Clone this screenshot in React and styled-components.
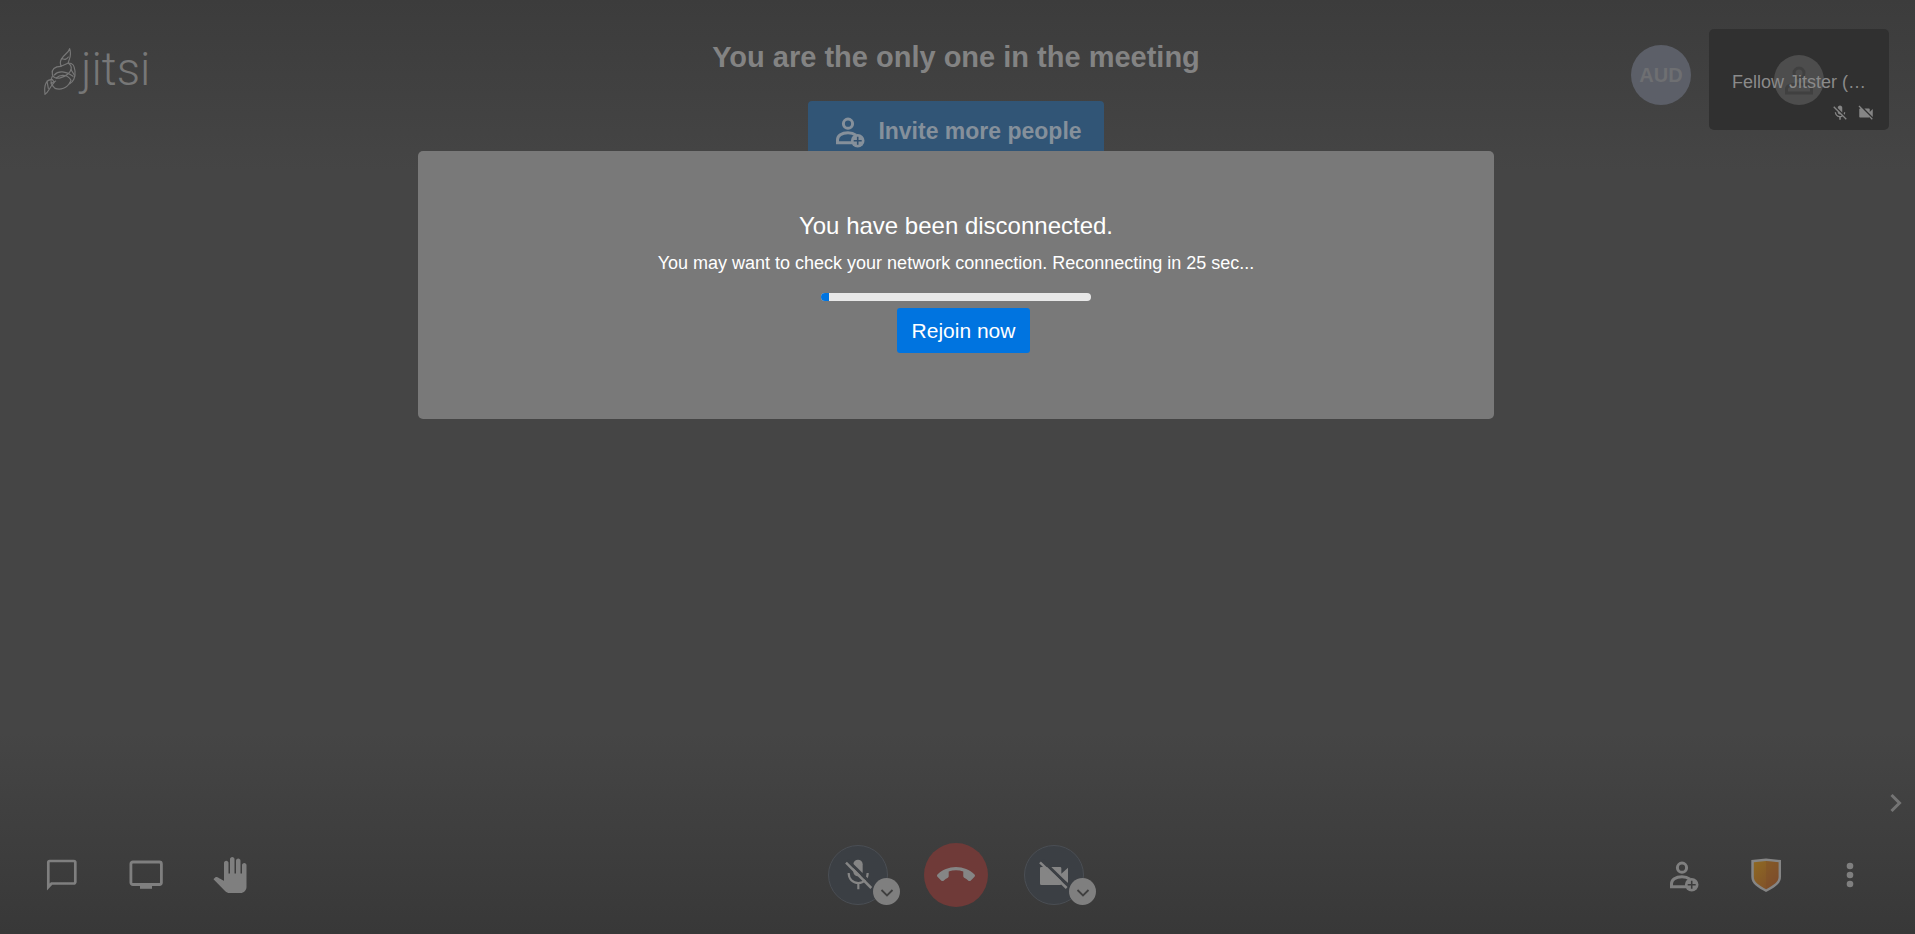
import React from 'react'
import styled, { createGlobalStyle } from 'styled-components';
import { MdPanTool, MdMicOff, MdVideocamOff, MdCallEnd } from 'react-icons/md';

const GlobalStyle = createGlobalStyle`
  * {
    box-sizing: border-box;
  }
  body {
    margin: 0;
    background-color: #444;
    font-family: "Liberation Sans", Arial, sans-serif;
  }
  button {
    font-family: inherit;
    border: none;
    padding: 0;
    cursor: pointer;
  }
`;

const ChatIcon = () => (
  <svg width="36" height="36" viewBox="0 0 36 36" fill="none" stroke="currentColor" strokeWidth="2.7">
    <path d="M4.300 30V5.500a1.500 1.500 0 0 1 1.500-1.500h24a1.500 1.500 0 0 1 1.500 1.500v19.500a1.500 1.500 0 0 1-1.500 1.500H7.500z" />
  </svg>
)

const ScreenIcon = () => (
  <svg width="36" height="36" viewBox="0 0 36 36" fill="none" stroke="currentColor" strokeWidth="2.8">
    <rect x="2.900" y="5" width="30.500" height="22.500" rx="2" />
    <path d="M12 29.800h12" strokeWidth="4" />
  </svg>
)

const InviteIcon = ({ plus }) => (
  <svg width="36" height="36" viewBox="0 0 36 36" fill="none" stroke="currentColor" strokeWidth="3">
    <circle cx="18" cy="10.700" r="4.600" />
    <path d="M22 29.700H7.500v-3c0-4 4-7 10.500-7 3 0 6 1 8 2.500" />
    <circle cx="27.700" cy="27.700" r="6.800" fill="currentColor" stroke="none" />
    <path d="M27.700 23.700v8M23.700 27.700h8" stroke={plus} strokeWidth="1.600" />
  </svg>
)

const ShieldIcon = () => (
  <svg width="36" height="36" viewBox="0 0 36 36">
    <defs>
      <linearGradient id="shield" x1="0" y1="0" x2="1" y2="1">
        <stop offset="0" stopColor="#8f6a22" />
        <stop offset="1" stopColor="#7c4a2c" />
      </linearGradient>
    </defs>
    <path d="M18 1.500 33 3v17c0 6.500-6.500 10.500-15 15C9.500 30.500 3.300 26.500 3.300 20V3z" fill="#858585" />
    <path d="M18 4 30.500 5.200V20c0 5-5 8-12.500 12.200C10.500 28 5.800 25 5.800 20V5.200z" fill="url(#shield)" />
    <path d="M18 4 30.500 5.200V20c0 5-5 8-12.500 12.200z" fill="#7c4a2c" fillOpacity=".35" />
  </svg>
)

const DotsIcon = () => (
  <svg width="36" height="36" viewBox="0 0 36 36" fill="currentColor">
    <circle cx="18" cy="9" r="3.300" />
    <circle cx="18" cy="18" r="3.300" />
    <circle cx="18" cy="27" r="3.300" />
  </svg>
)

const MutedMicIcon = () => (
  <svg width="32" height="32" viewBox="0 0 96 96" fill="none" stroke="currentColor" strokeWidth="6.500">
    <rect x="34" y="2" width="28" height="50" rx="14" fill="currentColor" stroke="none" />
    <path d="M20 42c0 18 12 30 29 30s28-12 28-30M49 72v19" />
    <path d="M16 3 96 83" stroke="#3b3f44" strokeWidth="9" />
    <path d="M12 11l76 76" strokeWidth="7.500" />
  </svg>
)

const CameraOffIcon = () => (
  <svg width="32" height="32" viewBox="0 0 96 96" fill="none" stroke="currentColor">
    <path d="M10 24h56a4 4 0 0 1 4 4v16l20-18v46L70 56v18a4 4 0 0 1-4 4H10a4 4 0 0 1-4-4V28a4 4 0 0 1 4-4z" fill="currentColor" stroke="none" />
    <path d="M12 3 94 83" stroke="#3b3f44" strokeWidth="9" />
    <path d="m6 10 80 77" strokeWidth="7.500" />
  </svg>
)

const SmallArrow = () => (
  <svg width="14" height="14" viewBox="0 0 14 14" fill="none" stroke="#404040" strokeWidth="1.800">
    <path d="m1.500 5 5.500 5.500L12.500 5" />
  </svg>
)

const Logo = () => (
  <svg width="34" height="48" viewBox="70 50 102 144" fill="none" stroke="#777" strokeWidth="3.500" strokeLinejoin="round" strokeLinecap="round">
    <path d="M150 55c-4 17-28 21-28 43l2 10q10-4 22-10c0-10 12-20 4-43zM126 84q12 8 20-4" />
    <path d="M124 108c-20 0-28 10-26 22 0 12 14 16 26 12 12-4 28-14 30-24M146 98c14 0 18 8 20 24 2 20-6 34-16 38" />
    <path d="M146 98c8 6 10 14 8 20l10 16M104 134c12-14 34-12 56 4M110 143c14-13 36-9 44 7l-4 10" />
    <path d="M98 138c-8 14-4 26 8 36 16 6 36 0 46-20M94 160l14-8" />
    <path d="M98 148c-16-2-26 12-22 44 12-8 12-20 28-36zM82 152l4 22" />
  </svg>
)

const App = () => {
  return (
    <Page>
      <GlobalStyle />
      <Header>
        <Brand href="#">
          <Logo />
          <Wordmark>jitsi</Wordmark>
        </Brand>
        <Subject>
          <Title>You are the only one in the meeting</Title>
          <InviteButton>
            <InviteIcon plus="#31506f" />
            Invite more people
          </InviteButton>
        </Subject>
        <Participants>
          <Avatar>AUD</Avatar>
          <Thumbnail>
            <DefaultAvatar>
              <svg width="30" height="30" viewBox="0 0 30 30" fill="none" stroke="#404040" strokeWidth="3">
                <circle cx="15" cy="8" r="5" />
                <path d="M2.500 28v-4c0-3 5-5 12.500-5s12.500 2 12.500 5v4z" />
              </svg>
            </DefaultAvatar>
            <DisplayName>Fellow Jitster (…</DisplayName>
            <StatusIcons>
              <MdMicOff size={18} />
              <MdVideocamOff size={18} />
            </StatusIcons>
          </Thumbnail>
        </Participants>
      </Header>

      <Dialog role="dialog" aria-labelledby="dialog-title">
        <DialogTitle id="dialog-title">You have been disconnected.</DialogTitle>
        <DialogText>You may want to check your network connection. Reconnecting in 25 sec...</DialogText>
        <Track>
          <Progress style={{ width: '3%' }} />
        </Track>
        <RejoinButton>Rejoin now</RejoinButton>
      </Dialog>

      <Footer>
        <FilmstripToggle aria-label="Toggle filmstrip">
          <svg width="12" height="20" viewBox="0 0 12 20" fill="none" stroke="currentColor" strokeWidth="3">
            <path d="m1.500 2 8 8-8 8" />
          </svg>
        </FilmstripToggle>
        <Toolbox>
          <Group>
            <ToolButton aria-label="Chat"><ChatIcon /></ToolButton>
            <ToolButton aria-label="Share screen"><ScreenIcon /></ToolButton>
            <ToolButton aria-label="Raise hand"><MdPanTool size={36} /></ToolButton>
          </Group>
          <CallControls>
            <Device>
              <RoundButton aria-label="Unmute"><MutedMicIcon /></RoundButton>
              <Settings aria-label="Audio settings"><SmallArrow /></Settings>
            </Device>
            <RoundButton $hangup aria-label="Leave"><MdCallEnd size={38} /></RoundButton>
            <Device>
              <RoundButton aria-label="Start camera"><CameraOffIcon /></RoundButton>
              <Settings aria-label="Video settings"><SmallArrow /></Settings>
            </Device>
          </CallControls>
          <Group $end>
            <ToolButton aria-label="Invite people"><InviteIcon plus="#3c3c3c" /></ToolButton>
            <ToolButton aria-label="Security"><ShieldIcon /></ToolButton>
            <ToolButton aria-label="More actions"><DotsIcon /></ToolButton>
          </Group>
        </Toolbox>
      </Footer>
    </Page>
  )
}

export default App

const Page = styled.div`
  min-height: 100vh;
  position: relative;
  display: flex;
  flex-direction: column;
  justify-content: space-between;
  background: linear-gradient(#3c3c3c, #454545 170px);
`;
const Header = styled.header`
  display: grid;
  grid-template-columns: 1fr auto 1fr;
  align-items: start;
  padding: 29px 26px 0 23px;
`;
const Brand = styled.a`
  display: flex;
  gap: 4px;
  margin: 18px 0 0 20px;
  justify-self: start;
  text-decoration: none;
`;
const Wordmark = styled.span`
  font-family: Roboto, sans-serif;
  font-size: 46px;
  font-weight: 300;
  line-height: 44px;
  color: #777;
`;
const Subject = styled.div`
  display: flex;
  flex-direction: column;
  align-items: center;
  gap: 28px;
  margin-top: 12px;
`;
const Title = styled.h1`
  margin: 0;
  font-size: 29px;
  line-height: 32px;
  color: #838383;
`;
const InviteButton = styled.button`
  display: flex;
  align-items: center;
  gap: 12px;
  height: 60px;
  padding: 0 22px;
  border-radius: 4px;
  background-color: #315576;
  color: #85909b;
  font-size: 23px;
  font-weight: bold;
`;
const Participants = styled.div`
  display: flex;
  gap: 18px;
  justify-self: end;
`;
const Avatar = styled.div`
  display: flex;
  align-items: center;
  justify-content: center;
  width: 60px;
  height: 60px;
  margin-top: 16px;
  border-radius: 50%;
  background-color: #5c5f68;
  color: #6e6f72;
  font-size: 20px;
  font-weight: bold;
`;
const Thumbnail = styled.div`
  position: relative;
  display: flex;
  align-items: center;
  justify-content: center;
  width: 180px;
  height: 101px;
  border-radius: 5px;
  background-color: #303030;
`;
const DefaultAvatar = styled.div`
  display: flex;
  align-items: center;
  justify-content: center;
  width: 50px;
  height: 50px;
  border-radius: 50%;
  background-color: #4d4d4d;
`;
const DisplayName = styled.span`
  position: absolute;
  left: 0;
  right: 0;
  top: 42px;
  font-size: 18px;
  line-height: 22px;
  text-align: center;
  color: #8a8a8a;
`;
const StatusIcons = styled.div`
  position: absolute;
  right: 14px;
  bottom: 8px;
  display: flex;
  gap: 8px;
  color: #858585;
`;
const Dialog = styled.section`
  position: absolute;
  top: 151px;
  left: 0;
  right: 3px;
  margin: 0 auto;
  display: flex;
  flex-direction: column;
  align-items: center;
  width: 56.2%;
  padding: 61px 24px 66px;
  border-radius: 5px;
  background-color: #797979;
  color: #fff;
`;
const DialogTitle = styled.h2`
  margin: 0 0 11px;
  font-size: 24px;
  font-weight: normal;
  line-height: 28px;
`;
const DialogText = styled.p`
  margin: 0;
  font-size: 18px;
  line-height: 24px;
`;
const Track = styled.div`
  width: 270px;
  height: 8px;
  margin: 18px 0 7px;
  border-radius: 4px;
  overflow: hidden;
  background-color: #e8e8e8;
`;
const Progress = styled.div`
  height: 100%;
  background-color: #0074e0;
`;
const RejoinButton = styled.button`
  height: 45px;
  margin-left: 15px;
  padding: 0 15px;
  border-radius: 3px;
  background-color: #0074e0;
  color: #fff;
  font-size: 21px;
`;
const Footer = styled.footer`
  display: flex;
  flex-direction: column;
  background: linear-gradient(#454545, #383838);
`;
const FilmstripToggle = styled.button`
  display: flex;
  align-self: flex-end;
  margin: 60px 13px 30px 0;
  background: none;
  color: #747474;
`;
const Toolbox = styled.div`
  display: grid;
  grid-template-columns: 1fr auto 1fr;
  align-items: center;
  padding: 0 47px 27px 44px;
`;
const Group = styled.div`
  display: flex;
  gap: 48px;
  justify-content: ${({ $end }) => ($end ? 'flex-end' : 'flex-start')};
`;
const ToolButton = styled.button`
  display: flex;
  background: none;
  color: #7f7f7f;
`;
const CallControls = styled.div`
  display: flex;
  align-items: center;
  gap: 36px;
`;
const Device = styled.div`
  position: relative;
`;
const RoundButton = styled.button`
  display: flex;
  align-items: center;
  justify-content: center;
  width: ${({ $hangup }) => ($hangup ? '64px' : '60px')};
  height: ${({ $hangup }) => ($hangup ? '64px' : '60px')};
  border: ${({ $hangup }) => ($hangup ? 'none' : '1px solid #4a4e54')};
  border-radius: 50%;
  background-color: ${({ $hangup }) => ($hangup ? '#6f3a38' : '#3b3f44')};
  color: #858585;
`;
const Settings = styled.button`
  position: absolute;
  right: -12px;
  bottom: 0;
  display: flex;
  align-items: center;
  justify-content: center;
  width: 27px;
  height: 27px;
  border-radius: 50%;
  background-color: #7f7f7f;
`;
